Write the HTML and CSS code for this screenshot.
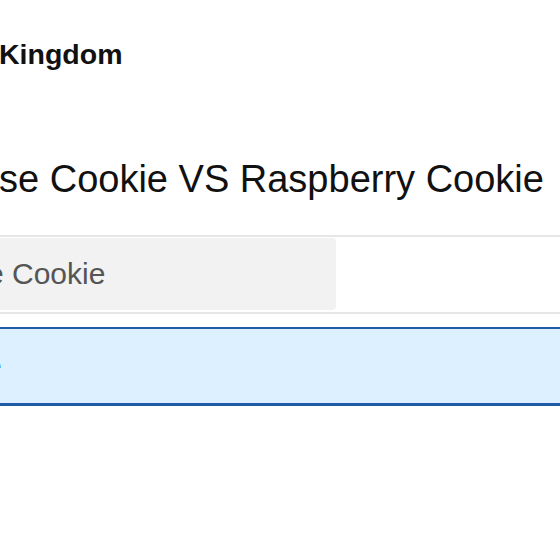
FILE: index.html
```html
<!DOCTYPE html>
<html>
<head>
<meta charset="utf-8">
<link rel="stylesheet" href="styles.css">
</head>
<body>
<div class="page">
  <div class="country">Kingdom</div>
  <h1 class="title">se Cookie VS Raspberry Cookie</h1>
  <div class="row">
    <div class="option"><span class="option-text">e Cookie</span></div>
  </div>
  <div class="selected"><span class="selected-text">e</span></div>
</div>
</body>
</html>
```
FILE: styles.css
```css
html, body {
  margin: 0;
  padding: 0;
  background: #ffffff;
  overflow: hidden;
}
body {
  font-family: "Liberation Sans", Arial, sans-serif;
  width: 560px;
  height: 560px;
}
.page {
  display: flex;
  flex-direction: column;
  padding-top: 37px;
}
.country {
  font-size: 28.5px;
  font-weight: bold;
  line-height: 34px;
  color: #111111;
  margin-left: -1px;
}
.title {
  margin: 85px 0 0 -1px;
  font-size: 38px;
  font-weight: normal;
  line-height: 46px;
  color: #111111;
  white-space: nowrap;
}
.row {
  margin-top: 33px;
  border-top: 2px solid #e6e6e6;
  border-bottom: 2px solid #e6e6e6;
  padding: 1px 0 2px 0;
  margin-right: -10px;
}
.option {
  width: 346px;
  margin-left: -10px;
  height: 72px;
  background: #f2f2f2;
  border-radius: 4px;
  display: flex;
  align-items: center;
}
.option-text {
  font-size: 30px;
  color: #555555;
  margin-left: -3px;
}
.selected {
  margin-top: 13px;
  margin-left: -10px;
  margin-right: -10px;
  height: 74px;
  background: #ddf0ff;
  border-top: 2px solid #1f5ca8;
  border-bottom: 3px solid #1f5ca8;
  display: flex;
  align-items: center;
}
.selected-text {
  font-size: 28px;
  color: #1f5ca8;
  margin-left: -4px;
}
```
